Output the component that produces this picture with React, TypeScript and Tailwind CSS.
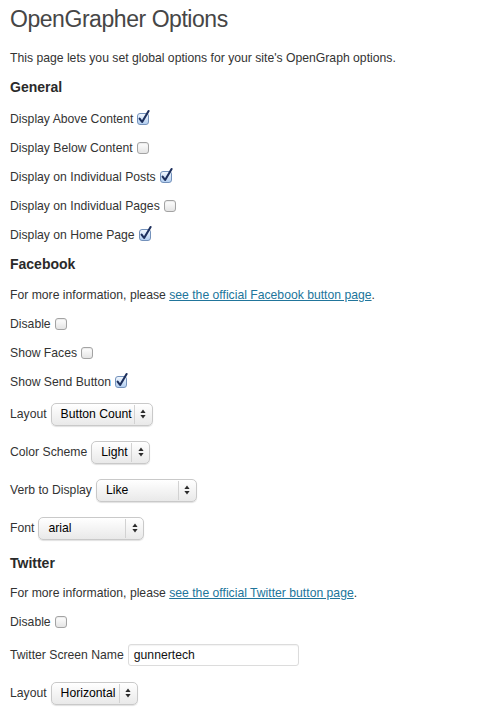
import React from "react";

const F = { fontFamily: '"Liberation Sans", Arial, Helvetica, sans-serif' };

function Checkbox({ checked = false }: { checked?: boolean }) {
  return (
    <span className="relative ml-[4px] inline-block h-[12px] w-[12px] shrink-0">
      <span
        className={
          checked
            ? "absolute inset-0 rounded-[3px] border border-[#7391bb] bg-gradient-to-b from-[#f0f6fd] to-[#b4cff0]"
            : "absolute inset-0 rounded-[3px] border border-[#a3a3a3] bg-gradient-to-b from-white to-[#e4e4e4] shadow-[inset_0_1px_1px_rgba(0,0,0,0.08)]"
        }
      />
      {checked && (
        <svg
          className="absolute left-0 top-[-5px] overflow-visible"
          width="13"
          height="17"
          viewBox="0 0 13 17"
        >
          <path
            d="M2.6 10.6 L5.1 14 L11.6 3"
            fill="none"
            stroke="#1d2f5c"
            strokeWidth="2.1"
            strokeLinecap="round"
            strokeLinejoin="round"
          />
        </svg>
      )}
    </span>
  );
}

function Select({ value, width }: { value: string; width: string }) {
  return (
    <div
      className={`ml-[4px] flex h-[23px] ${width} items-stretch rounded-[5px] border border-[#c9c9c9] bg-gradient-to-b from-white to-[#e9e9e9] shadow-[0_1px_1px_rgba(0,0,0,0.12)]`}
    >
      <div className="flex flex-1 items-center pl-[9px] text-[12.2px] text-[#000]">{value}</div>
      <div className="my-[1px] flex w-[18px] items-center justify-center border-l border-[#d2d2d2]">
        <svg width="6" height="10" viewBox="0 0 6 10">
          <path d="M3 0.5 L5.6 4 L0.4 4 Z" fill="#2b2b2b" />
          <path d="M3 9.5 L5.6 6 L0.4 6 Z" fill="#2b2b2b" />
        </svg>
      </div>
    </div>
  );
}

function TextRow({ children, mt }: { children: React.ReactNode; mt: string }) {
  return <div className={`flex h-[16px] items-center text-[12.2px] text-[#333] ${mt}`}>{children}</div>;
}

function Heading({ children, mt }: { children: React.ReactNode; mt: string }) {
  return (
    <div className={`flex h-[17px] items-center text-[14px] font-bold text-[#2a2a2a] ${mt}`}>{children}</div>
  );
}

function SelectRow({ label, value, width, mt }: { label: string; value: string; width: string; mt: string }) {
  return (
    <div className={`flex h-[24px] items-center text-[12.2px] text-[#333] ${mt}`}>
      <span>{label}</span>
      <Select value={value} width={width} />
    </div>
  );
}

export default function App() {
  return (
    <div className="min-h-[720px] w-[484px] bg-white pl-[10px]" style={F}>
      <div className="flex h-[38px] items-center text-[23px] tracking-[-0.45px] text-[#464646]">
        OpenGrapher Options
      </div>
      <TextRow mt="mt-[12px]">This page lets you set global options for your site's OpenGraph options.</TextRow>

      <Heading mt="mt-[13px]">General</Heading>
      <TextRow mt="mt-[15px]">
        Display Above Content <Checkbox checked />
      </TextRow>
      <TextRow mt="mt-[13px]">
        Display Below Content <Checkbox />
      </TextRow>
      <TextRow mt="mt-[13px]">
        Display on Individual Posts <Checkbox checked />
      </TextRow>
      <TextRow mt="mt-[13px]">
        Display on Individual Pages <Checkbox />
      </TextRow>
      <TextRow mt="mt-[13px]">
        Display on Home Page <Checkbox checked />
      </TextRow>

      <Heading mt="mt-[13px]">Facebook</Heading>
      <TextRow mt="mt-[14px]">
        <span className="whitespace-pre">For more information, please </span>
        <a className="text-[#21759b] underline" href="#">
          see the official Facebook button page
        </a>
        .
      </TextRow>
      <TextRow mt="mt-[13px]">
        Disable <Checkbox />
      </TextRow>
      <TextRow mt="mt-[13px]">
        Show Faces <Checkbox />
      </TextRow>
      <TextRow mt="mt-[13px]">
        Show Send Button <Checkbox checked />
      </TextRow>

      <SelectRow label="Layout" value="Button Count" width="w-[102px]" mt="mt-[12px]" />
      <SelectRow label="Color Scheme" value="Light" width="w-[59px]" mt="mt-[14px]" />
      <SelectRow label="Verb to Display" value="Like" width="w-[101px]" mt="mt-[14px]" />
      <SelectRow label="Font" value="arial" width="w-[106px]" mt="mt-[14px]" />

      <Heading mt="mt-[15px]">Twitter</Heading>
      <TextRow mt="mt-[13px]">
        <span className="whitespace-pre">For more information, please </span>
        <a className="text-[#21759b] underline" href="#">
          see the official Twitter button page
        </a>
        .
      </TextRow>
      <TextRow mt="mt-[13px]">
        Disable <Checkbox />
      </TextRow>
      <div className="mt-[14px] flex h-[22px] items-center text-[12.2px] text-[#333]">
        <span>Twitter Screen Name</span>
        <div className="ml-[4px] flex h-[22px] w-[171px] items-center rounded-[3px] border border-[#dcdcdc] bg-white pl-[5px] text-[12.2px] text-[#111] shadow-[inset_0_1px_1px_rgba(0,0,0,0.05)]">
          gunnertech
        </div>
      </div>
      <SelectRow label="Layout" value="Horizontal" width="w-[87px]" mt="mt-[15px]" />
    </div>
  );
}
